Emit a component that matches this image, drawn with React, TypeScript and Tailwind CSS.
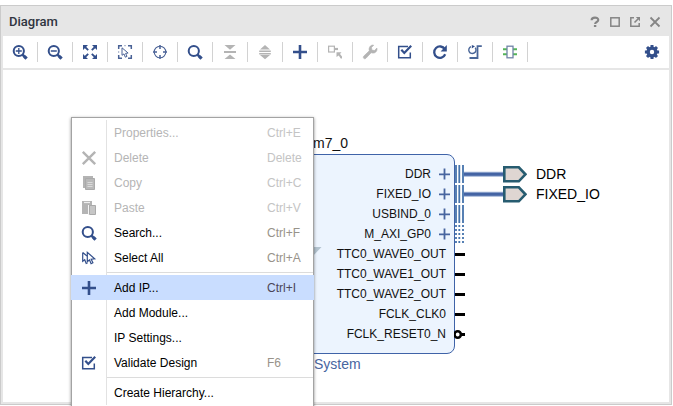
import type { ReactNode } from "react";

const BLUE = "#334f8b";
const GREY = "#b4b4b4";

function Icon({ children, color = BLUE }: { children: ReactNode; color?: string }) {
  return (
    <svg viewBox="0 0 16 16" className="block size-4 shrink-0" fill="none" stroke={color} strokeWidth="2" aria-hidden="true">
      {children}
    </svg>
  );
}

function Lens({ children }: { children?: ReactNode }) {
  return (
    <Icon>
      <circle cx="6.8" cy="7" r="5.1" strokeWidth="2" />
      <path d="M10.5 10.6l3 3" strokeWidth="2.6" />
      <path d="M12.3 12.3l2.3 2.3" strokeWidth="3.2" />
      {children}
    </Icon>
  );
}

const plusIcon = (
  <Icon>
    <path d="M8 1v14M1 8h14" strokeWidth="2.6" />
  </Icon>
);

const checkIcon = (
  <Icon>
    <path d="M11 2.5H1.7v11.3h11.6V8.5" strokeWidth="1.5" />
    <path d="M4.3 5.8l3 3.2 6.9-7.3" strokeWidth="2.2" />
  </Icon>
);

const tools: { name: string; icon: ReactNode; off?: boolean }[] = [
  {
    name: "Zoom in",
    icon: (
      <Lens>
        <path d="M6.8 4v6M3.8 7h6" strokeWidth="1.3" />
      </Lens>
    ),
  },
  {
    name: "Zoom out",
    icon: (
      <Lens>
        <path d="M3.8 7h6" strokeWidth="1.5" />
      </Lens>
    ),
  },
  {
    name: "Zoom fit",
    icon: (
      <Icon>
        <path d="M1 1h5L1 6zM15 1h-5l5 5zM1 15h5l-5-5zM15 15h-5l5-5z" fill={BLUE} stroke="none" />
        <path d="M3 3l3.2 3.2M13 3L9.8 6.2M3 13l3.2-3.2M13 13L9.8 9.8" strokeWidth="1.8" />
      </Icon>
    ),
  },
  {
    name: "Select area",
    icon: (
      <Icon color="#4a6296">
        <path d="M1.7 5V1.7H5M11 1.7h3.3V5M14.3 11v3.3H11M5 14.3H1.7V11" strokeWidth="1.5" />
        <path d="M1.7 7v2M7 1.7h2" strokeWidth="1" opacity=".5" />
        <path d="M5 3.8v7.5l2-1.4 1.3 3.3 1.7-.8-1.4-3 2.5-.4z" strokeWidth="1" />
      </Icon>
    ),
  },
  {
    name: "Center",
    icon: (
      <Icon color="#4a6296">
        <circle cx="8" cy="8" r="5.8" strokeWidth="1.1" />
        <path d="M8 1v4M8 11v4M1 8h4M11 8h4" strokeWidth="1.5" />
      </Icon>
    ),
  },
  { name: "Search", icon: <Lens /> },
  {
    name: "Collapse all",
    off: true,
    icon: (
      <Icon color={GREY}>
        <path d="M2.5 1h11L8 5.7zM2.5 15h11L8 10.6z" fill={GREY} stroke="none" />
        <path d="M2 8h12" />
      </Icon>
    ),
  },
  {
    name: "Expand all",
    off: true,
    icon: (
      <Icon color={GREY}>
        <path d="M3 5.5h10L8 1zM3 11h10l-5 4.3z" fill={GREY} stroke="none" />
        <path d="M2.2 7.2h11.6M2.2 9.8h11.6" strokeWidth="1.4" />
      </Icon>
    ),
  },
  { name: "Add IP", icon: plusIcon },
  {
    name: "Make connection",
    off: true,
    icon: (
      <Icon color={GREY}>
        <rect x="1.6" y="2.2" width="5.8" height="5.8" strokeWidth="1.2" />
        <path d="M8 5h3" strokeWidth="2.2" />
        <path d="M9.5 8.3h5L13 10l2 2.4v2.1h-1.3l-2-3L9.5 13z" fill={GREY} stroke="none" />
      </Icon>
    ),
  },
  {
    name: "Customize",
    off: true,
    icon: (
      <Icon color={GREY}>
        <path
          d="M11.7 1.2L9.5 3.5l.4 2.6 2.6.4L14.9 4c.7 2.6-1.2 5.2-4 5.1-.6 0-1.2-.1-1.7-.4L4 14.2c-1.6 1.6-3.7-.5-2.2-2.1L7.3 6.8C6.300 3.600 8.800.4 11.700 1.200z"
          fill={GREY}
          stroke={GREY}
          strokeWidth=".6"
        />
      </Icon>
    ),
  },
  { name: "Validate design", icon: checkIcon },
  {
    name: "Regenerate layout",
    icon: (
      <Icon>
        <path d="M12.8 5.2A5.7 5.7 0 1 0 13.2 10.3" strokeWidth="2.3" />
        <path d="M14.8 1v6.400H8.6z" fill={BLUE} stroke="none" />
      </Icon>
    ),
  },
  {
    name: "Optimize routing",
    icon: (
      <Icon color="#4a6698">
        <path d="M4 2.6a3.6 3.6 0 1 0 4.2 1.1" strokeWidth="1.4" />
        <path d="M4.8 1v3.4L8 2.2z" fill={BLUE} stroke="none" />
        <path d="M2.5 14h8V2.2h4.3" strokeWidth="1.8" />
      </Icon>
    ),
  },
  {
    name: "Interface view",
    icon: (
      <Icon>
        <path d="M1 5.3h4M1 10.3h4M11 5.3h4M11 10.3h4" stroke="#54b558" strokeWidth="1.9" />
        <rect x="5" y="2.2" width="6" height="11.6" stroke="#7184a8" strokeWidth="1.3" fill="#fff" />
      </Icon>
    ),
  },
];

const windowButtons: { name: string; icon: ReactNode }[] = [
  {
    name: "Help",
    icon: (
      <Icon color="#858585">
        <path d="M4.6 6.2C4.6 2.8 11.3 2.8 11.3 6c0 2-3.2 2-3.2 4" strokeWidth="2.1" />
        <path d="M8.1 11v2" strokeWidth="2.4" />
      </Icon>
    ),
  },
  {
    name: "Maximize",
    icon: (
      <Icon color="#858585">
        <rect x="3.8" y="3.8" width="8.4" height="8.4" strokeWidth="1.5" />
      </Icon>
    ),
  },
  {
    name: "Float",
    icon: (
      <Icon color="#858585">
        <path d="M7 3.8H3.8v8.4h8.4V9" strokeWidth="1.5" />
        <path d="M7.5 8.5L11 5" strokeWidth="1.6" />
        <path d="M8.8 3H13v4.2z" fill="#858585" stroke="none" />
      </Icon>
    ),
  },
  {
    name: "Close",
    icon: (
      <Icon color="#858585">
        <path d="M3.5 3.5l9 9M12.5 3.5l-9 9" strokeWidth="1.8" />
      </Icon>
    ),
  },
];

type Item = { label: string; keys?: string; icon?: ReactNode; off?: boolean; active?: boolean };

const menuGroups: Item[][] = [
  [
    { label: "Properties...", keys: "Ctrl+E", off: true },
    {
      label: "Delete",
      keys: "Delete",
      off: true,
      icon: (
        <Icon color={GREY}>
          <path d="M1.8 1.8l12.4 12.4M14.2 1.8L1.8 14.2" strokeWidth="2.4" />
        </Icon>
      ),
    },
    {
      label: "Copy",
      keys: "Ctrl+C",
      off: true,
      icon: (
        <Icon color={GREY}>
          <path d="M2 1h10v3H5v9H2z" fill={GREY} stroke="none" />
          <path d="M4.5 3.500h9v11h-9z" fill="#b9b9b9" stroke="#aaa" strokeWidth="1" />
          <path d="M6.500 7.5h5M6.500 9.5h5M6.500 11.5h5" stroke="#dadada" strokeWidth="1" />
        </Icon>
      ),
    },
    {
      label: "Paste",
      keys: "Ctrl+V",
      off: true,
      icon: (
        <Icon color={GREY}>
          <path d="M1 1h10v13H1z" fill={GREY} stroke="none" />
          <path d="M3 2.5h6" stroke="#eee" strokeWidth="1.2" />
          <path d="M8.5 5.5h6v9h-6z" fill="#c6c6c6" stroke="#aaa" strokeWidth="1" />
          <path d="M7.500 5v10" stroke="#f4f4f4" strokeWidth="1" />
        </Icon>
      ),
    },
    { label: "Search...", keys: "Ctrl+F", icon: <Lens /> },
    {
      label: "Select All",
      keys: "Ctrl+A",
      icon: (
        <Icon>
          <path d="M1.7 2.5v8.8l2-1.5 1.5 3.7 1.5-.7M1.7 2.5L6 6" strokeWidth="1.2" />
          <path d="M6.3 2.3v9.2l2.2-1.6 1.6 3.8 1.8-.9-1.7-3.6 3.5-.4z" strokeWidth="1.2" />
        </Icon>
      ),
    },
  ],
  [
    { label: "Add IP...", keys: "Ctrl+I", icon: plusIcon, active: true },
    { label: "Add Module..." },
    { label: "IP Settings..." },
    { label: "Validate Design", keys: "F6", icon: checkIcon },
  ],
  [{ label: "Create Hierarchy..." }],
];

function MenuRow({ label, keys, icon, off, active }: Item) {
  const tone = off ? "text-[#b5b5b5]" : "text-[#000]";
  const keyTone = active ? "text-[#4b4658]" : off ? "text-[#c4c4c4]" : "text-[#98938a]";
  return (
    <li role="none" className={active ? "-mx-px bg-[#c9ddff] px-px" : ""}>
      <button type="button" role="menuitem" disabled={off} className={`flex h-[25px] w-full items-center text-left ${tone}`}>
        <span className={`flex h-full w-[35px] shrink-0 items-center justify-center border-r ${active ? "border-transparent" : "border-[#e2e2e2]"}`}>
          {icon}
        </span>
        <span className="flex-1 pl-[7px]">{label}</span>
        {keys && <span className={`w-[46px] shrink-0 ${keyTone}`}>{keys}</span>}
      </button>
    </li>
  );
}

function ContextMenu() {
  return (
    <ul
      role="menu"
      className="absolute top-[117px] left-[71px] w-[243px] border border-[#a3a3a3] bg-white py-[2px] text-[12px] leading-4 shadow-[0px_1px_3px_rgba(0,0,0,0.45)]"
    >
      {menuGroups.map((group, g) => (
        <li role="none" key={g}>
          {g > 0 && (
            <div role="separator" className="flex h-[5px] items-center">
              <span className="h-full w-[35px] border-r border-[#e2e2e2]" />
              <span className="h-px flex-1 bg-[#dcdcdc]" />
            </div>
          )}
          <ul role="group">
            {group.map((item) => (
              <MenuRow key={item.label} {...item} />
            ))}
          </ul>
        </li>
      ))}
    </ul>
  );
}

type Kind = "bus" | "dotted" | "pin" | "inverted";

const ports: { name: string; kind: Kind }[] = [
  { name: "DDR", kind: "bus" },
  { name: "FIXED_IO", kind: "bus" },
  { name: "USBIND_0", kind: "bus" },
  { name: "M_AXI_GP0", kind: "dotted" },
  { name: "TTC0_WAVE0_OUT", kind: "pin" },
  { name: "TTC0_WAVE1_OUT", kind: "pin" },
  { name: "TTC0_WAVE2_OUT", kind: "pin" },
  { name: "FCLK_CLK0", kind: "pin" },
  { name: "FCLK_RESET0_N", kind: "inverted" },
];

function Stub({ kind }: { kind: Kind }) {
  return (
    <svg viewBox="0 0 12 20" className="absolute top-0 -right-[12px] h-5 w-3" fill="none" aria-hidden="true">
      {(kind === "bus" || kind === "dotted") && (
        <path
          d="M2 1v18M5.3 1v18M9 1v18"
          stroke="#4573ac"
          strokeWidth="1.8"
          strokeDasharray={kind === "dotted" ? "2 2" : undefined}
        />
      )}
      {kind === "pin" && <path d="M1 10.5h10" stroke="#000" strokeWidth="3" />}
      {kind === "inverted" && (
        <>
          <path d="M6 10.5h5" stroke="#000" strokeWidth="3" />
          <circle cx="3.7" cy="10.5" r="3.2" fill="#fff" stroke="#000" strokeWidth="2.6" />
        </>
      )}
    </svg>
  );
}

function IpBlock() {
  return (
    <div className="absolute top-[84px] left-[209px] w-[243px] rounded-[8px] border border-[#3f63a8] bg-[#ecf4fe] py-[9px] text-[12px] leading-5 text-[#111]">
      {ports.map(({ name, kind }) => {
        const bus = kind === "bus" || kind === "dotted";
        return (
          <div key={name} className={`relative flex h-5 items-center justify-end ${bus ? "gap-2 pr-[3px]" : "pr-2"}`}>
            <span>{name}</span>
            {bus && (
              <svg viewBox="0 0 12 12" className="size-3" stroke="#48659f" strokeWidth="1.8" aria-hidden="true">
                <path d="M5.500.5v11M0 6.300h11" />
              </svg>
            )}
            <Stub kind={kind} />
          </div>
        );
      })}
      <svg viewBox="0 0 10 10" className="absolute top-[92px] left-[99px] size-[10px]" aria-hidden="true">
        <path d="M0 0h9.5L0 10z" fill="#b3c3cf" />
      </svg>
    </div>
  );
}

function ExternalPort({ name }: { name: string }) {
  return (
    <div className="flex h-5 items-center gap-[9px]">
      <svg viewBox="0 0 63 20" className="h-5 w-[63px]" fill="none" aria-hidden="true">
        <path d="M0 10.3h40" stroke="#9db1d4" strokeWidth="5" />
        <path d="M0 10.3h40" stroke="#4464a4" strokeWidth="3" />
        <path d="M40.3 3.3h14.5l6.6 7-6.6 7H40.3z" fill="#dfd6d2" stroke="#275c70" strokeWidth="2.6" />
      </svg>
      <span>{name}</span>
    </div>
  );
}

export default function App() {
  return (
    <div className="relative h-screen overflow-hidden bg-white pt-[5px] pr-px pb-px font-['Liberation_Sans',Arial,sans-serif]">
      <section className="flex h-full flex-col border border-[#cbcbcb] bg-[#e6e6e6] px-[2px] pb-[2px]">
        <header className="flex h-[30px] shrink-0 items-center justify-between pt-[2px] pr-[6px] pl-[6px]">
          <h1 className="font-['Roboto',sans-serif] text-[13px] leading-5 font-medium text-[#2f3440]">Diagram</h1>
          <div className="flex gap-1">
            {windowButtons.map(({ name, icon }) => (
              <button key={name} type="button" aria-label={name}>
                {icon}
              </button>
            ))}
          </div>
        </header>
        <div role="toolbar" aria-label="Diagram tools" className="mb-[2px] flex h-8 shrink-0 items-center bg-white">
          {tools.map(({ name, icon, off }) => (
            <button
              key={name}
              type="button"
              aria-label={name}
              disabled={off}
              className="flex h-5 w-[35px] shrink-0 items-center justify-center border-r border-[#d2d2d2]"
            >
              {icon}
            </button>
          ))}
          <button type="button" aria-label="Settings" className="mr-[9px] ml-auto">
            <Icon>
              <circle cx="8" cy="8" r="3.9" strokeWidth="3.4" />
              <path
                d="M8 .9v3M8 12.100v3M.9 8h3M12.100 8h3M3 3l2 2M11 11l2 2M3 13l2-2M11 5l2-2"
                strokeWidth="3"
              />
            </Icon>
          </button>
        </div>
        <main className="relative flex-1 overflow-hidden bg-white">
          <IpBlock />
          <span className="absolute top-[63px] left-[310px] text-[14px] leading-5 text-[#111]">m7_0</span>
          <span className="absolute top-[284px] left-[311px] text-[14px] leading-5 text-[#48659f]">System</span>
          <div className="absolute top-[94px] left-[461px] text-[14px] leading-5 text-[#000]">
            <ExternalPort name="DDR" />
            <ExternalPort name="FIXED_IO" />
          </div>
        </main>
      </section>
      <ContextMenu />
    </div>
  );
}
